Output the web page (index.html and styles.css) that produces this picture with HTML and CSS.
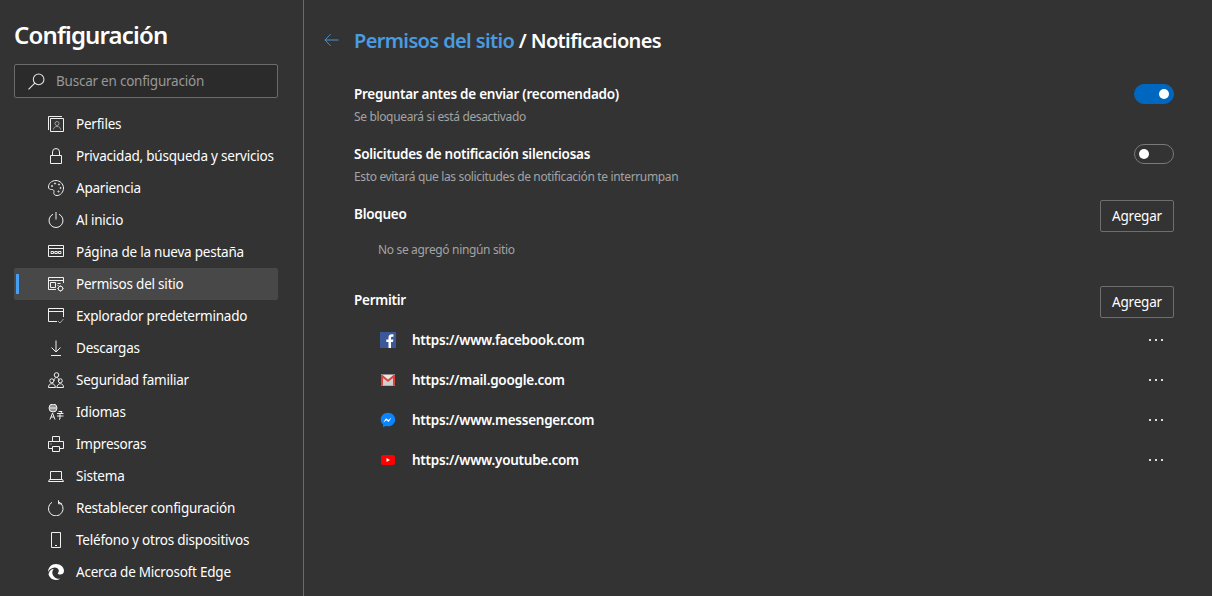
FILE: index.html
```html
<!DOCTYPE html>
<html lang="es">
<head>
    <meta charset="UTF-8">
    <meta name="viewport" content="width=device-width, initial-scale=1.0">
    <title>Configuración</title>
    <link rel="stylesheet" href="styles.css">
</head>
<body>

    <aside class="sidebar">
        <h1 class="app-title">Configuración</h1>
        <div class="search">
            <svg class="search-icon" viewBox="0 0 16 16"><circle cx="10" cy="6" r="5"/><path d="M6.4 9.6 0.5 15.5"/></svg>
            <span class="search-text">Buscar en configuración</span>
        </div>
        <nav class="nav">
            <a class="nav-item">
                <svg class="icon" viewBox="0 0 16 16"><path d="M.5 14V.5H14M2.500 2.500h13v13h-13z"/><path class="dim" d="M5.500 13.500c.2-2 1.300-3 3.500-3s3.300 1 3.500 3"/><circle class="dim" cx="9" cy="7.500" r="2"/></svg>
                Perfiles
            </a>
            <a class="nav-item">
                <svg class="icon" viewBox="0 0 16 16"><path d="M2.500 7.500h11v8h-11zM4.500 7.500V4a3.500 3.500 0 0 1 7 0v3.500"/></svg>
                Privacidad, búsqueda y servicios
            </a>
            <a class="nav-item">
                <svg class="icon" viewBox="0 0 16 16"><path d="M8 .5C3.500.5.500 3.500.500 7c0 2 1.500 2.500 3 2.500s2.500.5 2.500 2c0 1-.5 1.500 0 2.500s1.500 1.500 3 1.500c3.500 0 6.500-3.500 6.500-7.500S12 .5 8 .5z"/><circle cx="4" cy="6" r=".6"/><circle cx="7" cy="3.500" r=".6"/><circle cx="11" cy="4.500" r=".6"/><circle cx="12.500" cy="8" r=".6"/><circle cx="10.500" cy="11.500" r=".6"/></svg>
                Apariencia
            </a>
            <a class="nav-item">
                <svg class="icon" viewBox="0 0 16 16"><path d="M5 2.200a7 7 0 1 0 6 0M8 0v7.500"/></svg>
                Al inicio
            </a>
            <a class="nav-item">
                <svg class="icon" viewBox="0 0 16 16"><path d="M.5 1.500h15v11H.5zM.5 4.500h15M3 7.500h2.500v2H3zM6.800 7.500h2.500v2H6.800zM10.500 7.500H13v2h-2.500z"/></svg>
                Página de la nueva pestaña
            </a>
            <a class="nav-item active">
                <svg class="icon" viewBox="0 0 16 16"><path d="M15.500 7V1.500H.5v12H8M.5 4.500h15M2.500 6.500h5v5h-5zM9.500 7.500h3M9.500 9.500h1"/><circle cx="12.500" cy="12.500" r="2.300"/><path d="M12.500 9.500v1M12.500 14.500v1M9.500 12.500h1M14.500 12.500h1"/></svg>
                Permisos del sitio
            </a>
            <a class="nav-item">
                <svg class="icon" viewBox="0 0 16 16"><path d="M9 13.500H.5v-13h15V9M.5 3.500h15"/><path class="dim" d="M10 13l2 2 3.500-4"/></svg>
                Explorador predeterminado
            </a>
            <a class="nav-item">
                <svg class="icon" viewBox="0 0 16 16"><path d="M8 .5v11M3.500 7.500 8 12l4.500-4.500M3 15.500h10"/></svg>
                Descargas
            </a>
            <a class="nav-item">
                <svg class="icon" viewBox="0 0 16 16"><circle cx="8.500" cy="3" r="2.300"/><circle cx="3.800" cy="8.800" r="2"/><circle cx="12.300" cy="8.800" r="2"/><path d="M.5 15.500c0-2.500 1.200-3.800 3.300-3.800s3.200 1.300 3.700 3.800zM15.500 15.500c0-2.500-1.200-3.800-3.200-3.800-1.800 0-3 1.300-3.600 3.800zM6 9c0-2 1-3.500 2.500-3.500S11 7 11 9"/></svg>
                Seguridad familiar
            </a>
            <a class="nav-item">
                <svg class="icon" viewBox="0 0 16 16"><circle cx="5" cy="4" r="4"/><path d="M1 4h8M5 0v8M3 .8v6.400M7 .8v6.400M2 15.500 4.500 9l2.500 6.500M3 13h3M9 9.500h6.500M10.500 7.500h3.500l-2 3v4.500l-1 .5M9 12h6.500"/></svg>
                Idiomas
            </a>
            <a class="nav-item">
                <svg class="icon" viewBox="0 0 16 16"><path d="M4.500 5.500v-5h7v5M4.500 12.500h-4v-7h15v7h-4M4.500 10.500h7v5h-7zM2.500 8h1"/></svg>
                Impresoras
            </a>
            <a class="nav-item">
                <svg class="icon" viewBox="0 0 16 16"><path d="M2.500 11.500v-8h11v8M.5 13.500l1-2h13l1 2z"/></svg>
                Sistema
            </a>
            <a class="nav-item">
                <svg class="icon" viewBox="0 0 16 16"><path d="M10.500 1.500A7.300 7.300 0 1 1 4 2M10.500 0v3.500H14" transform="translate(0 .3)"/></svg>
                Restablecer configuración
            </a>
            <a class="nav-item">
                <svg class="icon" viewBox="0 0 16 16"><path d="M3.500.5h9v15h-9zM7 13.500h2"/></svg>
                Teléfono y otros dispositivos
            </a>
            <a class="nav-item">
                <svg class="icon icon-fill" viewBox="0 0 16 16"><path d="M8 0c4.500 0 8 3 8 7 0 2.300-1.800 3.600-3.800 3.600-1.300 0-2.400-.5-2.400-1.200 0-.6 1-.9 1-2.300C10.800 5 9 3.600 6.700 3.600 3.500 3.600 1 5.800.1 8 .1 3.500 3.500 0 8 0z"/><path d="M.5 10.300C1.200 6.800 3.500 5 5.800 5c-1 1-1.500 2.200-1.500 3.500 0 3.300 3 6.200 6.500 6.300.6 0 1 0 1.400-.1C10.800 15.500 9.400 16 8 16c-3.600 0-6.600-2.200-7.500-5.700z"/></svg>
                Acerca de Microsoft Edge
            </a>
        </nav>
    </aside>

    <main class="main">
        <header class="page-head">
            <svg class="back" viewBox="0 0 16 14"><path d="M15.500 7H1M7 .8 1 7l6 6.200"/></svg>
            <h2 class="page-title"><a class="crumb">Permisos del sitio</a> / Notificaciones</h2>
        </header>

        <div class="setting">
            <div>
                <div class="label">Preguntar antes de enviar (recomendado)</div>
                <div class="hint">Se bloqueará si está desactivado</div>
            </div>
            <span class="toggle on"></span>
        </div>
        <div class="setting">
            <div>
                <div class="label">Solicitudes de notificación silenciosas</div>
                <div class="hint">Esto evitará que las solicitudes de notificación te interrumpan</div>
            </div>
            <span class="toggle"></span>
        </div>

        <div class="section-head">
            <div class="label">Bloqueo</div>
            <button class="btn">Agregar</button>
        </div>
        <p class="empty">No se agregó ningún sitio</p>

        <div class="section-head">
            <div class="label">Permitir</div>
            <button class="btn">Agregar</button>
        </div>
        <ul class="sites">
            <li class="site">
                <svg class="favicon" viewBox="0 0 16 16"><rect width="16" height="16" fill="#3b5998"/><path fill="#fff" d="M11 16v-6h2l.4-2.500H11V6c0-.8.3-1.300 1.300-1.300h1.200V2.400C13.200 2.300 12.500 2.300 11.700 2.300 9.800 2.300 8.500 3.400 8.500 5.600v1.900h-2.200V10h2.200v6z"/></svg>
                <span class="site-url">https://www.facebook.com</span>
                <span class="more"><i></i><i></i><i></i></span>
            </li>
            <li class="site">
                <svg class="favicon" viewBox="0 0 16 16"><rect x="1" y="2.500" width="14" height="11" fill="#e8e8e8"/><path fill="#d0d0d0" d="M3 13.500V6l5 4 5-4v7.500z"/><path fill="#d9443a" d="M1 3h1.500L8 7.500 13.500 3H15v10.500h-2V6L8 10 3 6v7.500H1z"/></svg>
                <span class="site-url">https://mail.google.com</span>
                <span class="more"><i></i><i></i><i></i></span>
            </li>
            <li class="site">
                <svg class="favicon" viewBox="0 0 16 16"><path fill="#0a84ff" d="M8 .7C3.900.7.800 3.600.800 7.500c0 2 .8 3.800 2.300 5v2.800l2.500-1.300c.8.200 1.600.3 2.400.3 4.100 0 7.200-3 7.200-6.800S12.100.7 8 .7z"/><path fill="#fff" d="M3.700 9.800 6 6.200l2.400 1.700 2.100-1.700c.3-.2.6 0 .4.300L8.700 10 6.300 8.300 4 10.100c-.2.100-.4-.1-.3-.3z"/></svg>
                <span class="site-url">https://www.messenger.com</span>
                <span class="more"><i></i><i></i><i></i></span>
            </li>
            <li class="site">
                <svg class="favicon" viewBox="0 0 16 16"><rect x="1" y="3" width="14" height="10" rx="2.500" fill="#f00"/><path fill="#fff" d="M6.500 6v4L10 8z"/></svg>
                <span class="site-url">https://www.youtube.com</span>
                <span class="more"><i></i><i></i><i></i></span>
            </li>
        </ul>
    </main>

</body>
</html>
```

FILE: styles.css
```css
* {
    box-sizing: border-box;
}
html, body {
    height: 100%;
}
body {
    margin: 0;
    display: flex;
    overflow: hidden;
    background-color: #333333;
    color: #ffffff;
    font-family: "Noto Sans", Arial, sans-serif;
    font-size: 13px;
}

/* Sidebar */
.sidebar {
    width: 304px;
    flex-shrink: 0;
    padding: 19px 25px 0 14px;
    border-right: 1px solid #6b6b6b;
}
.app-title {
    margin: 0 0 13px;
    font-size: 24px;
    line-height: 32px;
    font-weight: 600;
    letter-spacing: -0.85px;
}
.search {
    display: flex;
    align-items: center;
    height: 34px;
    padding-left: 13px;
    margin-bottom: 10px;
    background-color: #2b2b2b;
    border: 1px solid #6b6b6b;
    border-radius: 2px;
}
.search-icon {
    width: 17px;
    height: 17px;
    margin-right: 11px;
    fill: none;
    stroke: #e6e6e6;
}
.search-text {
    color: #989898;
    font-size: 13.5px;
    letter-spacing: -0.23px;
}
.nav-item {
    position: relative;
    display: flex;
    align-items: center;
    gap: 12px;
    height: 32px;
    padding-left: 34px;
    font-size: 13.5px;
    letter-spacing: -0.22px;
    border-radius: 2px;
}
.nav-item.active {
    background-color: #484848;
}
.nav-item.active::before {
    content: "";
    position: absolute;
    left: 2px;
    top: 6px;
    width: 3px;
    height: 20px;
    background-color: #479ef5;
}
.icon {
    width: 16px;
    height: 16px;
    flex-shrink: 0;
    fill: none;
    stroke: #f0f0f0;
    stroke-width: 1;
}
.icon-fill {
    fill: #ffffff;
    stroke: none;
}
.icon .dim {
    stroke: #a0a0a0;
}

/* Main content */
.main {
    flex: 1;
    padding: 0 38px 0 20px;
}
.page-head {
    display: flex;
    align-items: center;
    height: 82px;
    gap: 15px;
}
.back {
    width: 15px;
    height: 14px;
    margin-bottom: 2px;
    fill: none;
    stroke: #4a9be0;
}
.page-title {
    margin: 0 0 1px;
    font-size: 20px;
    font-weight: 600;
    letter-spacing: -0.63px;
}
.crumb {
    color: #4a9be0;
}
.setting {
    display: flex;
    justify-content: space-between;
    align-items: flex-start;
    height: 60px;
    margin-left: 30px;
    padding-top: 2px;
}
.label {
    font-size: 13.5px;
    line-height: 20px;
    font-weight: 600;
    letter-spacing: -0.26px;
}
.hint {
    margin-top: 4px;
    font-size: 12px;
    line-height: 18px;
    color: #a3a3a3;
    letter-spacing: -0.35px;
}
.toggle {
    position: relative;
    width: 40px;
    height: 20px;
    border: 1px solid #7a7a7a;
    border-radius: 10px;
}
.toggle::after {
    content: "";
    position: absolute;
    left: 4px;
    top: 4px;
    width: 10px;
    height: 10px;
    border-radius: 50%;
    background-color: #ffffff;
}
.toggle.on {
    background-color: #0067c0;
    border-color: #0067c0;
}
.toggle.on::after {
    left: 24px;
}
.section-head {
    display: flex;
    justify-content: space-between;
    align-items: center;
    height: 32px;
    margin-left: 30px;
    margin-top: -2px;
}
.section-head .label {
    margin-bottom: 4px;
}
.btn {
    width: 74px;
    height: 32px;
    padding: 0;
    background: none;
    border: 1px solid #6e6e6e;
    border-radius: 2px;
    color: #ffffff;
    font-family: inherit;
    font-size: 13.5px;
    letter-spacing: -0.2px;
}
.empty {
    margin: 0 0 22px 54px;
    height: 34px;
    line-height: 36px;
    font-size: 12px;
    color: #a3a3a3;
    letter-spacing: -0.34px;
}
.sites {
    list-style: none;
    margin: 2px 0 0 56px;
    padding: 0;
}
.site {
    display: flex;
    align-items: center;
    height: 40px;
}
.favicon {
    width: 16px;
    height: 16px;
    margin-right: 16px;
}
.site-url {
    flex: 1;
    font-size: 13.5px;
    font-weight: 600;
    letter-spacing: -0.25px;
}
.more {
    display: flex;
    gap: 4px;
    margin-right: 11px;
    margin-bottom: 1px;
}
.more i {
    width: 2px;
    height: 2px;
    background-color: #e0e0e0;
}
```
